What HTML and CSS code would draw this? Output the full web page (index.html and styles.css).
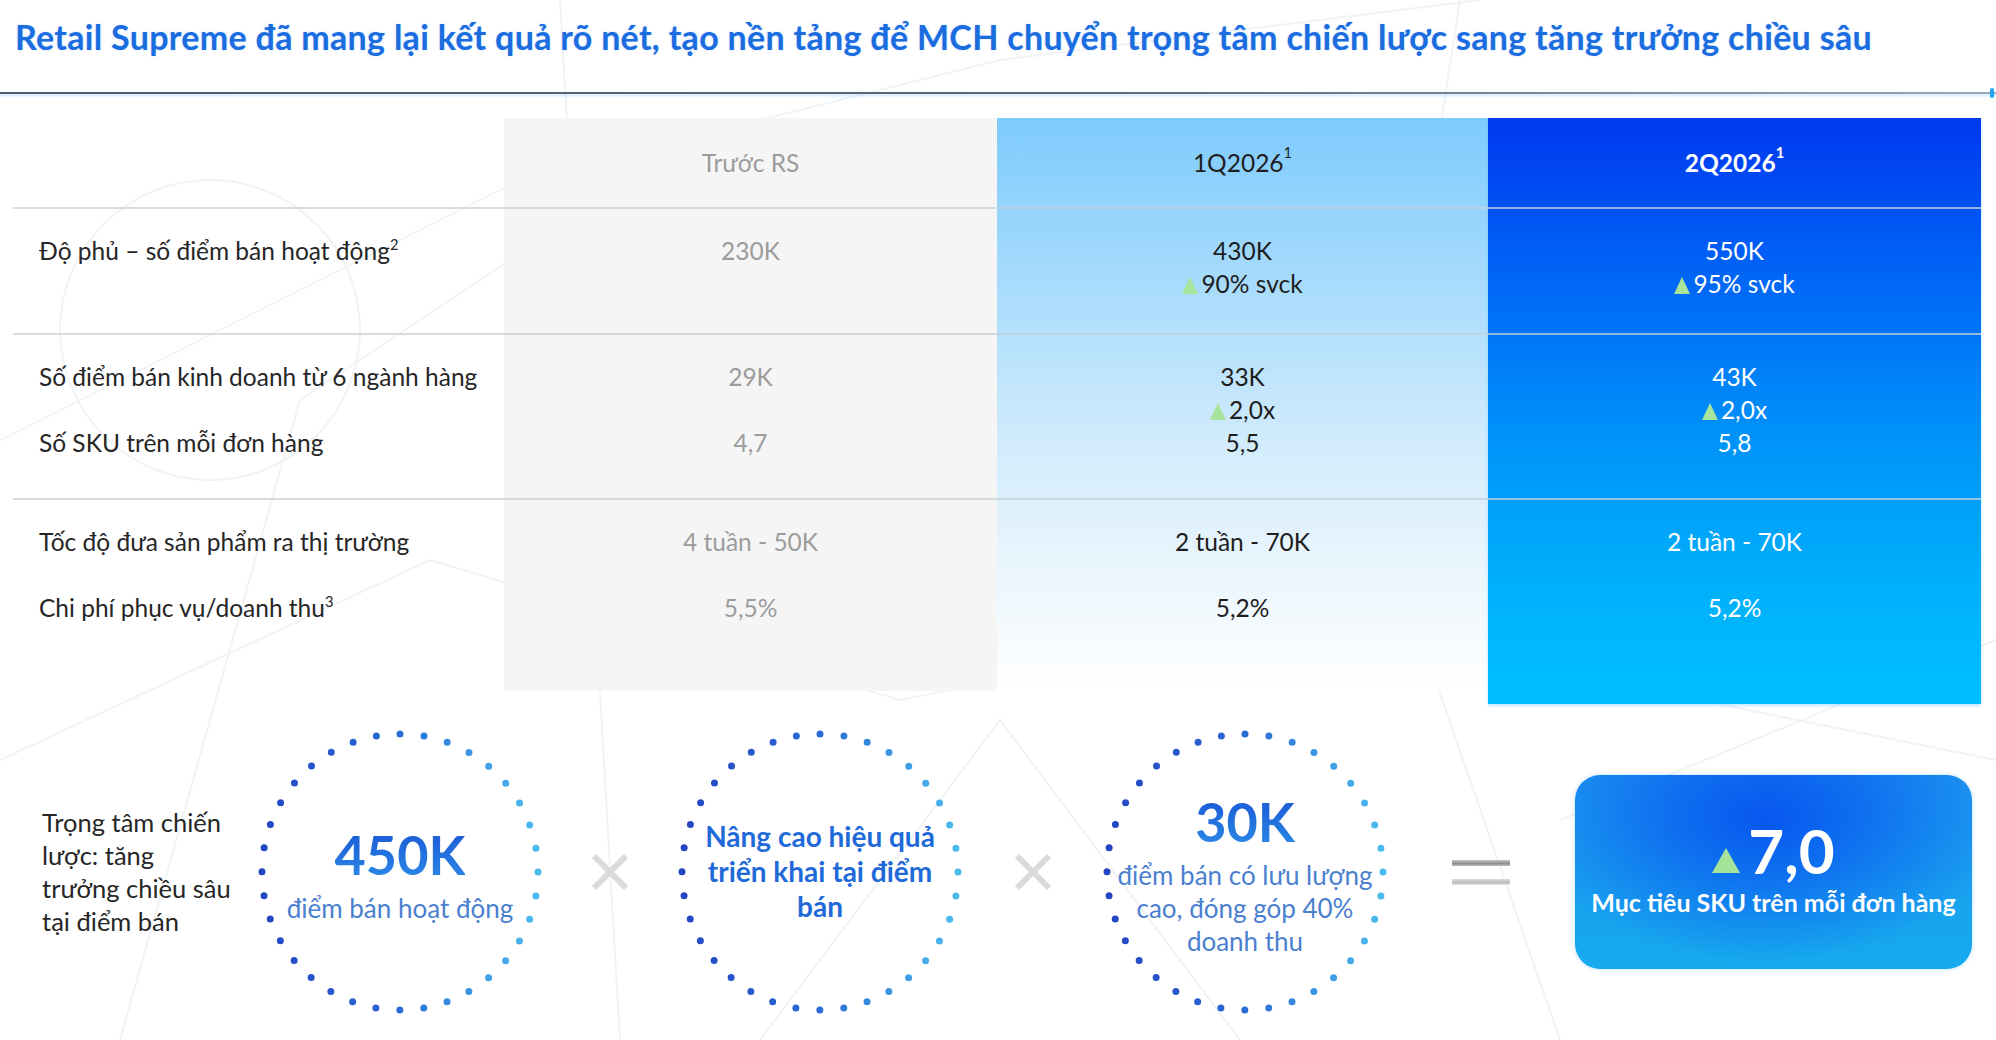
FILE: index.html
```html
<!DOCTYPE html>
<html lang="vi">
<head>
<meta charset="utf-8">
<title>Retail Supreme</title>
<link rel="stylesheet" href="styles.css">
</head>
<body>
<div class="page">
  <svg class="bg-net" width="1996" height="1040" viewBox="0 0 1996 1040" aria-hidden="true">
    <g fill="none" stroke="#f1f3f5" stroke-width="2">
      <circle cx="210" cy="330" r="150"/>
      <path d="M0 440 L520 180 L1000 60 L1480 0"/>
      <path d="M120 1040 L300 400 L600 200"/>
      <path d="M560 0 L620 1040"/>
      <path d="M1460 0 L1380 520 L1560 1040"/>
      <path d="M0 760 L430 560 L900 700 L1300 620 L1996 760"/>
      <path d="M760 1040 L1000 720 L1240 1040"/>
      <path d="M1560 820 L1996 640"/>
    </g>
  </svg>

  <header class="title-bar">
    <h1 class="title">Retail Supreme đã mang lại kết quả rõ nét, tạo nền tảng để MCH chuyển trọng tâm chiến lược sang tăng trưởng chiều sâu</h1>
  </header>
  <div class="rule"><span class="rule-tick"></span></div>

  <section class="kpi-table">
    <div class="col-bg col-bg-before"></div>
    <div class="col-bg col-bg-q1"></div>
    <div class="col-bg col-bg-q2"></div>

    <div class="sep sep-1"></div>
    <div class="sep sep-2"></div>
    <div class="sep sep-3"></div>

    <!-- header -->
    <div class="cell head r1 c1"></div>
    <div class="cell head r1 c2 muted">Trước RS</div>
    <div class="cell head r1 c3 dark">1Q2026<sup>1</sup></div>
    <div class="cell head r1 c4 light bold">2Q2026<sup>1</sup></div>

    <!-- row 1 -->
    <div class="cell label r2 c1"><span>Độ phủ – số điểm bán hoạt động<sup>2</sup></span></div>
    <div class="cell val r2 c2 muted"><span>230K</span></div>
    <div class="cell val r2 c3 dark"><span>430K</span><span><i class="tri"></i>90% svck</span></div>
    <div class="cell val r2 c4 light"><span>550K</span><span><i class="tri"></i>95% svck</span></div>

    <!-- row 2 -->
    <div class="cell label spaced r3 c1"><span>Số điểm bán kinh doanh từ 6 ngành hàng</span><span>Số SKU trên mỗi đơn hàng</span></div>
    <div class="cell val spaced r3 c2 muted"><span>29K</span><span>4,7</span></div>
    <div class="cell val r3 c3 dark"><span>33K</span><span><i class="tri"></i>2,0x</span><span>5,5</span></div>
    <div class="cell val r3 c4 light"><span>43K</span><span><i class="tri"></i>2,0x</span><span>5,8</span></div>

    <!-- row 3 -->
    <div class="cell label spaced r4 c1"><span>Tốc độ đưa sản phẩm ra thị trường</span><span>Chi phí phục vụ/doanh thu<sup>3</sup></span></div>
    <div class="cell val spaced r4 c2 muted"><span>4 tuần - 50K</span><span>5,5%</span></div>
    <div class="cell val spaced r4 c3 dark"><span>2 tuần - 70K</span><span>5,2%</span></div>
    <div class="cell val spaced r4 c4 light"><span>2 tuần - 70K</span><span>5,2%</span></div>
  </section>

  <section class="formula">
    <p class="focus">Trọng tâm chiến<br>lược: tăng<br>trưởng chiều sâu<br>tại điểm bán</p>

    <div class="ring">
      <svg class="ring-dots" width="284" height="284" viewBox="0 0 284 284" aria-hidden="true">
        <defs>
          <linearGradient id="dotGrad1" x1="0" y1="0" x2="0" y2="1">
            <stop offset="0" stop-color="#2445c2"/>
            <stop offset="0.5" stop-color="#2a6cd6"/>
            <stop offset="1" stop-color="#4cbcee"/>
          </linearGradient>
        </defs>
        <circle cx="142" cy="142" r="138" fill="none" stroke="url(#dotGrad1)" stroke-width="7" stroke-linecap="round" stroke-dasharray="0 24.085" transform="rotate(-90 142 142)"/>
      </svg>
      <div class="ring-content">
        <div class="big-num">450K</div>
        <div class="ring-text">điểm bán hoạt động</div>
      </div>
    </div>

    <div class="op op-x1">
      <svg width="40" height="40" viewBox="0 0 40 40" aria-hidden="true"><path d="M4 4 L36 36 M36 4 L4 36" stroke="#dadada" stroke-width="6"/></svg>
    </div>

    <div class="ring">
      <svg class="ring-dots" width="284" height="284" viewBox="0 0 284 284" aria-hidden="true">
        <defs>
          <linearGradient id="dotGrad2" x1="0" y1="0" x2="0" y2="1">
            <stop offset="0" stop-color="#2445c2"/>
            <stop offset="0.5" stop-color="#2a6cd6"/>
            <stop offset="1" stop-color="#4cbcee"/>
          </linearGradient>
        </defs>
        <circle cx="142" cy="142" r="138" fill="none" stroke="url(#dotGrad2)" stroke-width="7" stroke-linecap="round" stroke-dasharray="0 24.085" transform="rotate(-90 142 142)"/>
      </svg>
      <div class="ring-content">
        <div class="ring-bold">Nâng cao hiệu quả<br>triển khai tại điểm<br>bán</div>
      </div>
    </div>

    <div class="op op-x2">
      <svg width="40" height="40" viewBox="0 0 40 40" aria-hidden="true"><path d="M4 4 L36 36 M36 4 L4 36" stroke="#dadada" stroke-width="6"/></svg>
    </div>

    <div class="ring">
      <svg class="ring-dots" width="284" height="284" viewBox="0 0 284 284" aria-hidden="true">
        <defs>
          <linearGradient id="dotGrad3" x1="0" y1="0" x2="0" y2="1">
            <stop offset="0" stop-color="#2445c2"/>
            <stop offset="0.5" stop-color="#2a6cd6"/>
            <stop offset="1" stop-color="#4cbcee"/>
          </linearGradient>
        </defs>
        <circle cx="142" cy="142" r="138" fill="none" stroke="url(#dotGrad3)" stroke-width="7" stroke-linecap="round" stroke-dasharray="0 24.085" transform="rotate(-90 142 142)"/>
      </svg>
      <div class="ring-content">
        <div class="big-num">30K</div>
        <div class="ring-text">điểm bán có lưu lượng<br>cao, đóng góp 40%<br>doanh thu</div>
      </div>
    </div>

    <div class="op op-eq">
      <span class="eq-bar eq-top"></span>
      <span class="eq-bar eq-bottom"></span>
    </div>

    <div class="target">
      <div class="target-num"><i class="tri tri-big"></i>7,0</div>
      <div class="target-text">Mục tiêu SKU trên mỗi đơn hàng</div>
    </div>
  </section>
</div>
</body>
</html>
```

FILE: styles.css
```css
* { box-sizing: border-box; }

html, body {
  margin: 0;
  padding: 0;
  background: #ffffff;
}

body {
  font-family: "Lato", "Open Sans", "Noto Sans", sans-serif;
  color: #262626;
}

.page {
  position: relative;
  width: 1996px;
  height: 1040px;
  overflow: hidden;
  background: #ffffff;
}

.bg-net {
  position: absolute;
  left: 0;
  top: 0;
  z-index: 0;
}

.title-bar {
  position: relative;
  z-index: 1;
  height: 92px;
  padding: 17px 0 0 15px;
}

.title {
  margin: 0;
  font-size: 34px;
  line-height: 40px;
  font-weight: 700;
  color: #1b6ddf;
  white-space: nowrap;
  letter-spacing: 0.3px;
  text-shadow: 0 0 2px rgba(60, 150, 255, 0.35);
}

.rule {
  position: relative;
  z-index: 1;
  height: 2px;
  background: linear-gradient(90deg, #4f5a68 0%, #5d6878 55%, #9aa6b6 100%);
  box-shadow: 0 2px 3px rgba(120, 190, 255, 0.45);
}

.rule-tick {
  position: absolute;
  right: 2px;
  top: -4px;
  width: 4px;
  height: 10px;
  border-radius: 2px;
  background: #23a6f2;
}

/* ---------- table ---------- */
.kpi-table {
  position: relative;
  z-index: 1;
  margin: 24px 0 0 13px;
  display: grid;
  grid-template-columns: 491px 493px 491px 493px;
  grid-template-rows: 89px 126px 165px 193px 13px;
}

.col-bg { grid-row: 1 / 5; }
.col-bg-before {
  grid-column: 2;
  background: #f5f5f5;
}
.col-bg-q1 {
  grid-column: 3;
  background: linear-gradient(180deg, #7ecbfd 0%, #a9dcfc 30%, #d3ecfc 58%, #ebf6fd 80%, #ffffff 100%);
}
.col-bg-q2 {
  grid-column: 4;
  grid-row: 1 / 6;
  background: linear-gradient(180deg, #0038ef 0%, #0067f7 28%, #0093f9 55%, #00b0fb 80%, #00bfff 100%);
  box-shadow: 0 2px 3px rgba(0, 170, 255, 0.25);
}

.sep {
  grid-column: 1 / -1;
  align-self: start;
  height: 2px;
  background: rgba(200, 208, 216, 0.75);
  z-index: 1;
}
.sep-1 { grid-row: 2; }
.sep-2 { grid-row: 3; }
.sep-3 { grid-row: 4; }

.cell {
  position: relative;
  z-index: 2;
  font-size: 24.5px;
  line-height: 33px;
}
.r1 { grid-row: 1; }
.r2 { grid-row: 2; }
.r3 { grid-row: 3; }
.r4 { grid-row: 4; }
.c1 { grid-column: 1; }
.c2 { grid-column: 2; }
.c3 { grid-column: 3; }
.c4 { grid-column: 4; }

.head {
  display: flex;
  align-items: center;
  justify-content: center;
}

.label, .val {
  display: flex;
  flex-direction: column;
  padding-top: 27px;
}
.label { padding-left: 26px; color: #262626; }
.val { align-items: center; }
.spaced { gap: 33px; }

.muted { color: #9c9c9c; }
.dark { color: #1e1e1e; }
.light { color: #ffffff; }
.bold { font-weight: 700; }

sup {
  font-size: 60%;
  line-height: 0;
  vertical-align: 0;
  position: relative;
  top: -0.7em;
}

.tri {
  display: inline-block;
  width: 0;
  height: 0;
  border-left: 8px solid transparent;
  border-right: 8px solid transparent;
  border-bottom: 17px solid #a8e49b;
  margin-right: 3px;
  vertical-align: -1px;
}

/* ---------- formula ---------- */
.formula {
  position: relative;
  z-index: 1;
  height: 336px;
  display: flex;
  align-items: center;
  padding-left: 42px;
}

.focus {
  margin: 0;
  width: 216px;
  font-size: 25.5px;
  line-height: 33px;
  color: #262626;
}

.ring {
  position: relative;
  width: 284px;
  height: 284px;
  flex: none;
  display: flex;
  align-items: center;
  justify-content: center;
  text-align: center;
}

.ring-dots {
  position: absolute;
  left: 0;
  top: 0;
}

.ring-content {
  position: relative;
  display: flex;
  flex-direction: column;
  align-items: center;
}

.big-num {
  font-size: 54px;
  line-height: 58px;
  font-weight: 700;
  color: #1d66da;
  background: linear-gradient(180deg, #1a56d4, #2c8ce8);
  -webkit-background-clip: text;
  background-clip: text;
  -webkit-text-fill-color: transparent;
  margin-top: 6px;
}

.ring-text {
  font-size: 26px;
  line-height: 33px;
  color: #4b7fcf;
  margin-top: 8px;
}

.ring-bold {
  font-size: 28px;
  line-height: 35px;
  font-weight: 700;
  color: #1f6ad8;
  margin-top: -2px;
}

.op {
  flex: none;
  display: flex;
  align-items: center;
  justify-content: center;
  width: 136px;
  height: 60px;
}
.op-x2 { width: 141px; }

.op-eq {
  width: 188px;
  flex-direction: column;
  gap: 13px;
}
.eq-bar {
  display: block;
  width: 58px;
  height: 6px;
}
.eq-top { background: linear-gradient(180deg, #c6c6c6, #8d8d8d 60%, #bdbdbd); }
.eq-bottom { background: linear-gradient(180deg, #dcdcdc, #bdbdbd 60%, #e2e2e2); }

.target {
  flex: none;
  width: 397px;
  height: 194px;
  border-radius: 25px;
  background:
    radial-gradient(ellipse 60% 75% at 48% 22%, #0757ef 0%, rgba(7, 87, 239, 0.65) 40%, rgba(7, 87, 239, 0) 100%),
    linear-gradient(180deg, #1e96f0 0%, #16aaee 100%);
  box-shadow: 0 0 4px rgba(40, 160, 255, 0.35);
  display: flex;
  flex-direction: column;
  align-items: center;
  justify-content: center;
  color: #ffffff;
  padding-bottom: 8px;
}

.target-num {
  font-size: 62px;
  line-height: 66px;
  font-weight: 700;
  display: flex;
  align-items: flex-end;
  margin-bottom: 2px;
}
.tri-big {
  border-left: 14px solid transparent;
  border-right: 14px solid transparent;
  border-bottom: 25px solid #a6e39a;
  margin: 0 8px 10px 0;
}

.target-text {
  font-size: 25px;
  line-height: 34px;
  font-weight: 700;
  margin-top: 0;
}
```
